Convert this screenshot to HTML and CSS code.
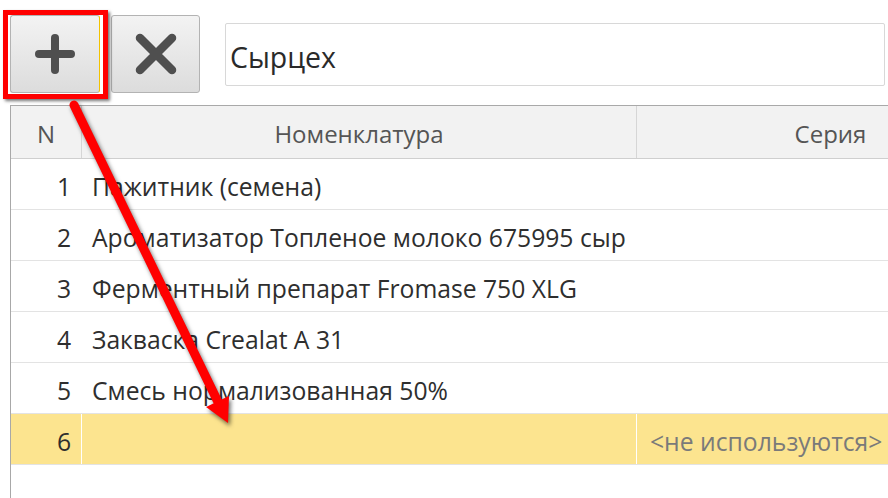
FILE: index.html
```html
<!DOCTYPE html>
<html lang="ru">
<head>
<meta charset="utf-8">
<title>Сырцех</title>
<link rel="stylesheet" href="styles.css">
</head>
<body>
<div class="page">
  <div class="toolbar">
    <button class="btn btn-add" type="button" aria-label="Добавить">
      <svg width="40" height="40" viewBox="0 0 40 40"><rect x="0" y="16" width="40" height="8" rx="4" fill="#4f4f4f"/><rect x="16" y="0" width="8" height="40" rx="4" fill="#4f4f4f"/></svg>
    </button>
    <button class="btn btn-del" type="button" aria-label="Удалить">
      <svg width="42" height="42" viewBox="0 0 42 42"><path d="M5 5 L37 37 M37 5 L5 37" stroke="#4f4f4f" stroke-width="8.5" stroke-linecap="round"/></svg>
    </button>
    <div class="field">Сырцех</div>
  </div>

  <div class="table">
    <div class="row head">
      <div class="cell center">N</div>
      <div class="cell name center">Номенклатура</div>
      <div class="cell ser center">Серия</div>
    </div>
    <div class="row"><div class="cell num">1</div><div class="cell name">Пажитник (семена)</div><div class="cell ser"></div></div>
    <div class="row"><div class="cell num">2</div><div class="cell name">Ароматизатор Топленое молоко 675995 сыр</div><div class="cell ser"></div></div>
    <div class="row"><div class="cell num">3</div><div class="cell name">Ферментный препарат Fromase 750 XLG</div><div class="cell ser"></div></div>
    <div class="row"><div class="cell num">4</div><div class="cell name">Закваска Crealat A 31</div><div class="cell ser"></div></div>
    <div class="row"><div class="cell num">5</div><div class="cell name">Смесь нормализованная 50%</div><div class="cell ser"></div></div>
    <div class="row selected"><div class="cell num">6</div><div class="cell name"></div><div class="cell ser muted">&lt;не используются&gt;</div></div>
  </div>

  <div class="highlight"></div>
  <svg class="arrow" width="888" height="498" viewBox="0 0 888 498">
    <line x1="74" y1="105" x2="218" y2="402" stroke="#ff0000" stroke-width="9" stroke-linecap="round"/>
    <polygon points="228,423 206,407 229,396" fill="#ff0000"/>
  </svg>
</div>
</body>
</html>
```

FILE: styles.css
```css
html, body {
  margin: 0;
  padding: 0;
  background: #ffffff;
}
body {
  width: 888px;
  height: 498px;
  overflow: hidden;
  font-family: "Open Sans", "Noto Sans", sans-serif;
  color: #2e2e2e;
}
.page {
  position: relative;
  width: 888px;
  height: 498px;
  overflow: hidden;
}
.toolbar {
  display: flex;
  align-items: flex-start;
  padding: 15px 0 0 10px;
  gap: 11px;
  height: 78px;
}
.btn {
  flex: none;
  width: 90px;
  height: 78px;
  margin: 0;
  padding: 0;
  border: 1px solid #b3b3b3;
  border-radius: 3px;
  background: linear-gradient(#f3f3f3, #dcdcdc);
  display: flex;
  align-items: center;
  justify-content: center;
}
.btn-add {
  width: 90px;
  border-right: 1px solid #f2c200;
}
.btn-del {
  width: 89px;
}
.field {
  flex: none;
  width: 660px;
  height: 63px;
  margin: 8px 0 0 14px;
  border: 1px solid #d8d8d8;
  border-radius: 2px;
  box-sizing: border-box;
  padding: 4px 0 0 4px;
  display: flex;
  align-items: center;
  font-size: 28.5px;
  color: #2a2a2a;
}
.table {
  margin: 12px 0 0 10px;
  width: 1014px;
  height: 393px;
  border-left: 1px solid #a8a8a8;
}
.row {
  display: grid;
  grid-template-columns: 70px 555px 388px;
  height: 50px;
  border-bottom: 1px solid #e3e3e3;
  font-size: 24.7px;
}
.row.head {
  height: 52px;
  background: #f2f2f2;
  border-top: 1px solid #a9a9a9;
  border-bottom: 1px solid #cfcfcf;
  color: #555555;
  font-size: 24px;
}
.cell {
  display: flex;
  align-items: center;
  padding: 4px 11px 0 11px;
  white-space: nowrap;
  overflow: hidden;
}
.head .cell {
  padding-top: 3px;
}
.cell.num {
  justify-content: flex-end;
  padding-right: 10px;
}
.cell.center {
  justify-content: center;
}
.head .cell + .cell {
  border-left: 1px solid #d6d6d6;
}
.row.selected {
  background: #fce48f;
}
.selected .cell + .cell {
  border-left: 1px solid #ffffff;
}
.cell.ser.muted {
  padding-left: 13px;
  color: #7a7a7a;
}
.highlight {
  position: absolute;
  left: 3px;
  top: 10px;
  width: 95px;
  height: 79px;
  border: 5px solid #ff0000;
  box-shadow: 2px 2px 3px rgba(0, 0, 0, 0.55);
}
.arrow {
  position: absolute;
  left: 0;
  top: 0;
  filter: drop-shadow(2px 3px 2px rgba(0, 0, 0, 0.55));
}
```
